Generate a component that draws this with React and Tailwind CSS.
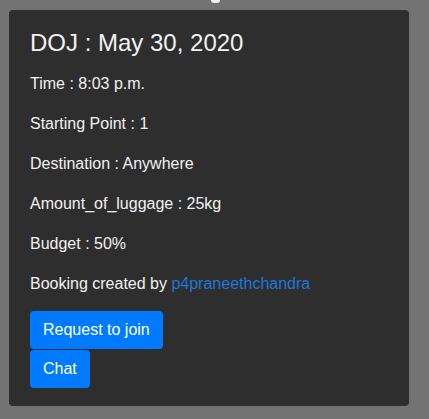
const booking = {
    doj: 'May 30, 2020',
    time: '8:03 p.m.',
    start: '1',
    destination: 'Anywhere',
    luggage: '25kg',
    budget: '50%',
    user: 'p4praneethchandra',
};

const App = () => {
    return (
        <div className="min-h-screen bg-[#737373] px-[9px] pt-[10px] pb-4 font-['Liberation_Sans',Arial,sans-serif] text-[#f2f2f2]">
            {/* tail of the heading scrolled above the view */}
            <div className="relative h-0">
                <span className="absolute left-[202px] top-[-10px] h-[3px] w-[9px] rounded-b bg-[#f2f2f2]"></span>
            </div>
            <div className="w-[400px] rounded bg-[#2e2e2e] px-[21px] pt-[19px] pb-[18px]">
                <h4 className="mb-[14px] text-[24px] leading-[28.8px]">DOJ : {booking.doj}</h4>
                <p className="mb-4 text-base leading-6">Time : {booking.time}</p>
                <p className="mb-4 text-base leading-6">Starting Point : {booking.start}</p>
                <p className="mb-4 text-base leading-6">Destination : {booking.destination}</p>
                <p className="mb-4 text-base leading-6">Amount_of_luggage : {booking.luggage}</p>
                <p className="mb-4 text-base leading-6">Budget : {booking.budget}</p>
                <p className="mb-[15px] text-base leading-6">
                    Booking created by <a href="#" className="text-[#1f76dc]">{booking.user}</a>
                </p>
                <div className="flex flex-col items-start gap-[1px]">
                    <button className="rounded bg-[#007bff] px-[13px] py-[7px] text-base leading-6 text-white">
                        Request to join
                    </button>
                    <button className="rounded bg-[#007bff] px-[13px] py-[7px] text-base leading-6 text-white">
                        Chat
                    </button>
                </div>
            </div>
        </div>
    );
};

export default App;
